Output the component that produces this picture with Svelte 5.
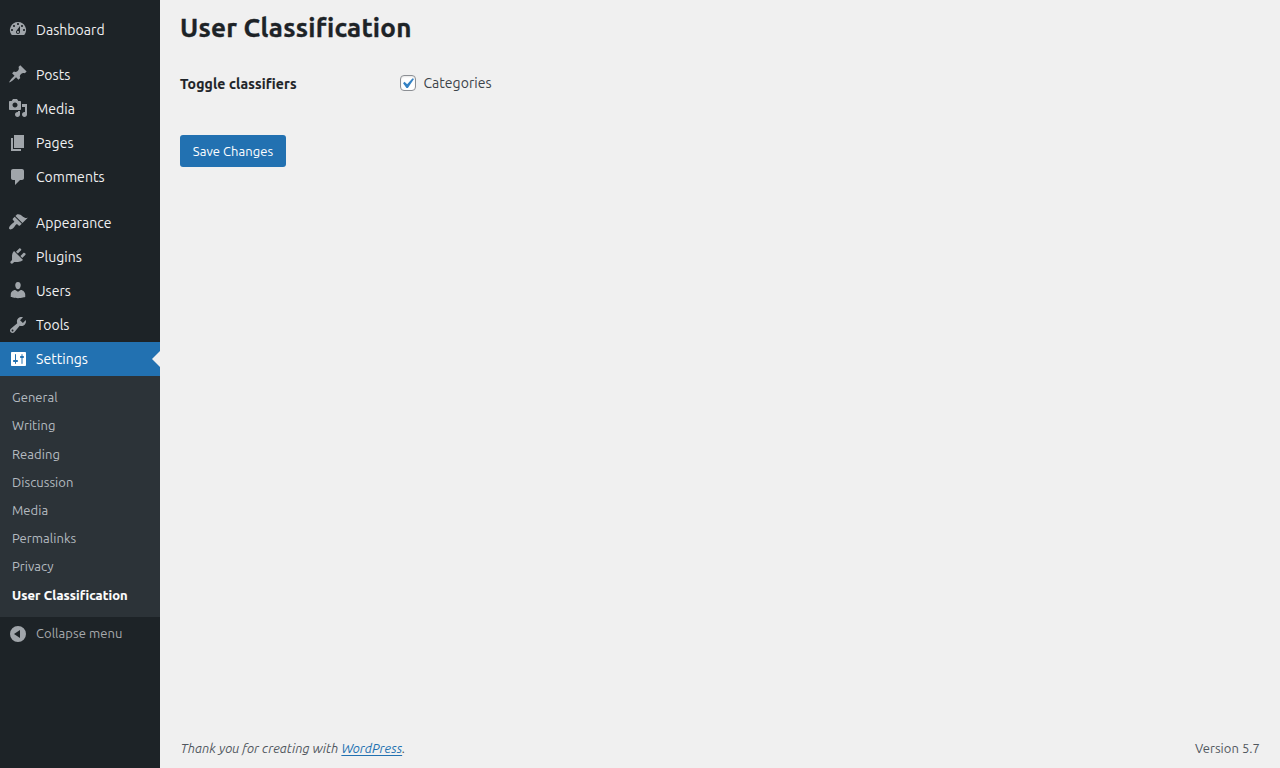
<script>
  const menu = [
    { label: 'Dashboard', dy: -1, d: 'M3.76 16h12.48A7.998 7.998 0 0 0 10 3a7.998 7.998 0 0 0-6.24 13zM10 4c.55 0 1 .45 1 1s-.45 1-1 1-1-.45-1-1 .45-1 1-1zM6 6c.55 0 1 .45 1 1s-.45 1-1 1-1-.45-1-1 .45-1 1-1zm8 0c.55 0 1 .45 1 1s-.45 1-1 1-1-.45-1-1 .45-1 1-1zm-5.37 5.55L12 7v6c0 1.1-.9 2-2 2s-2-.9-2-2c0-.57.24-1.08.63-1.45zM4 10c.55 0 1 .45 1 1s-.45 1-1 1-1-.45-1-1 .45-1 1-1zm12 0c.55 0 1 .45 1 1s-.45 1-1 1-1-.45-1-1 .45-1 1-1zm-5 3c0-.55-.45-1-1-1s-1 .45-1 1 .45 1 1 1 1-.45 1-1z' },
    { label: 'Posts', gap: 11, dy: -1, d: 'M10.44 3.02l1.82-1.82 6.36 6.35-1.83 1.82c-1.05-.68-2.48-.57-3.41.36l-.75.75c-.92.93-1.04 2.35-.35 3.41l-1.83 1.82-2.41-2.41-2.8 2.79c-.42.42-3.38 2.71-3.8 2.29s1.86-3.39 2.28-3.81l2.79-2.79L4.1 9.36l1.83-1.82c1.05.69 2.48.57 3.4-.36l.75-.75c.93-.92 1.05-2.35.36-3.41z' },
    { label: 'Media', dy: -1, d: 'M13 11V4c0-.55-.45-1-1-1h-1.67L9 1H5L3.67 3H2c-.55 0-1 .45-1 1v7c0 .55.45 1 1 1h10c.55 0 1-.45 1-1zM7 4.5c1.38 0 2.5 1.12 2.5 2.5S8.38 9.5 7 9.5 4.5 8.38 4.5 7 5.62 4.5 7 4.5zM14 6h5v10.5c0 1.38-1.12 2.5-2.5 2.5S14 17.88 14 16.5s1.12-2.5 2.5-2.5c.17 0 .34.02.5.05V9h-3V6zm-4 8.05V13h2v3.5c0 1.38-1.12 2.5-2.5 2.5S7 17.88 7 16.5 8.12 14 9.5 14c.17 0 .34.02.5.05z' },
    { label: 'Pages', dy: 0, d: 'M6 15V2h10v13H6zm-1 1h8v2H3V5h2v11z' },
    { label: 'Comments', dy: 0, d: 'M5 2h9c1.1 0 2 .9 2 2v7c0 1.1-.9 2-2 2h-2l-5 5v-5H5c-1.1 0-2-.9-2-2V4c0-1.1.9-2 2-2z' },
    { label: 'Appearance', gap: 12, dy: -1, d: 'M14.48 11.06L7.41 3.99l1.5-1.5c.5-.56 2.3-.47 3.51.32 1.21.8 1.43 1.28 2.91 2.1 1.18.64 2.45 1.26 4.45.85zm-.71.71L6.7 4.7 4.93 6.47c-.39.39-.39 1.02 0 1.41l1.06 1.06c.39.39.39 1.03 0 1.42-.6.6-1.43 1.11-2.21 1.69-.35.26-.7.53-1.01.84C1.43 14.23.4 16.08 1.4 17.07c.99 1 2.84-.03 4.18-1.36.31-.31.58-.66.85-1.02.57-.78 1.08-1.61 1.69-2.21.39-.39 1.02-.39 1.41 0l1.06 1.06c.39.39 1.02.39 1.41 0z' },
    { label: 'Plugins', dy: -1, d: 'M13.11 4.36L9.87 7.6 8 5.73l3.24-3.24c.35-.34 1.05-.2 1.56.32.52.51.66 1.21.31 1.55zm-8 1.77l.91-1.12 9.01 9.01-1.19.84c-.71.71-2.63 1.16-3.82 1.16H6.14L4.9 17.26c-.59.59-1.54.59-2.12 0-.59-.58-.59-1.53 0-2.12l1.24-1.24v-3.88c0-1.13.4-3.19 1.09-3.89zm7.26 3.97l3.24-3.24c.34-.35 1.04-.21 1.55.31.52.51.66 1.21.31 1.55l-3.24 3.25z' },
    { label: 'Users', dy: -1, d: 'M10 9.25c-2.27 0-2.73-3.44-2.73-3.44C7 4.02 7.82 2 9.97 2c2.16 0 2.98 2.02 2.71 3.81 0 0-.41 3.44-2.68 3.44zm0 2.57L12.72 10c2.39 0 4.52 2.33 4.52 4.53v2.49s-3.65 1.13-7.24 1.13c-3.65 0-7.24-1.13-7.24-1.13v-2.49c0-2.25 1.94-4.48 4.47-4.48z' },
    { label: 'Tools', dy: 0, d: 'M16.68 9.77c-1.34 1.34-3.3 1.67-4.95.99l-5.41 6.52c-.99.99-2.59.99-3.58 0s-.99-2.59 0-3.57l6.52-5.42c-.68-1.65-.35-3.61.99-4.95 1.28-1.28 3.12-1.62 4.72-1.06l-2.89 2.89 2.82 2.82 2.86-2.87c.53 1.58.18 3.39-1.08 4.65zM3.81 16.21c.4.39 1.04.39 1.43 0 .4-.4.4-1.04 0-1.43-.39-.4-1.03-.4-1.43 0-.39.39-.39 1.03 0 1.43z' },
    { label: 'Settings', current: true, dy: 0, d: 'M18 16V4c0-.55-.45-1-1-1H4c-.55 0-1 .45-1 1v12c0 .55.45 1 1 1h13c.55 0 1-.45 1-1zM8 11h1c.55 0 1 .45 1 1s-.45 1-1 1H8v1.5c0 .28-.22.5-.5.5s-.5-.22-.5-.5V13H6c-.55 0-1-.45-1-1s.45-1 1-1h1V5.5c0-.28.22-.5.5-.5s.5.22.5.5V11zm6-2h-1c-.55 0-1-.45-1-1s.45-1 1-1h.5V5.5c0-.28.22-.5.5-.5s.5.22.5.5V7h.5c.55 0 1 .45 1 1s-.45 1-1 1h-.5v5.5c0 .28-.22.5-.5.5s-.5-.22-.5-.5V9z' }
  ];
  const submenu = ['General', 'Writing', 'Reading', 'Discussion', 'Media', 'Permalinks', 'Privacy', 'User Classification'];
  let checked = $state(true);
</script>

<div class="admin">
  <nav class="sidebar">
    {#each menu as item}
      <a href="#top" class="item" class:current={item.current} style:margin-top="{item.gap ?? 0}px">
        <svg class="icon" viewBox="0 {-item.dy} 20 20"><path d={item.d} fill-rule="evenodd" /></svg>
        <span>{item.label}</span>
      </a>
    {/each}
    <div class="submenu">
      {#each submenu as label, i}
        <a href="#top" class:active={i === submenu.length - 1}>{label}</a>
      {/each}
    </div>
    <button class="collapse">
      <svg class="icon" viewBox="0 0 20 20"><path fill-rule="evenodd" d="M10 2a8 8 0 1 1 0 16a8 8 0 0 1 0-16zm2 12V6l-6 4z" /></svg>
      <span>Collapse menu</span>
    </button>
  </nav>
  <main>
    <h1>User Classification</h1>
    <div class="row">
      <strong>Toggle classifiers</strong>
      <label>
        <input type="checkbox" bind:checked />
        <span class="box">
          {#if checked}
            <svg viewBox="0 0 20 20"><path d="M14.83 4.89l1.34.94-5.81 8.38H9.02L5.78 9.67l1.34-1.25 2.57 2.4z" /></svg>
          {/if}
        </span>
        <span class="name">Categories</span>
      </label>
    </div>
    <button class="save">Save Changes</button>
    <footer>
      <em>Thank you for creating with <a href="#top">WordPress</a>.</em>
      <span class="version">Version 5.7</span>
    </footer>
  </main>
</div>

<style>
  :global(body) { background: #f0f0f0; }
  .admin {
    display: flex;
    height: 768px;
    overflow: hidden;
    font-family: Ubuntu, "Noto Sans", "Open Sans", sans-serif;
    font-size: 13px;
    letter-spacing: 0.05px;
    color: #3c434a;
  }
  .sidebar {
    width: 160px;
    flex: none;
    box-sizing: border-box;
    padding-top: 13px;
    background: #1d2327;
  }
  a { text-decoration: none; }
  .item {
    position: relative;
    display: flex;
    align-items: center;
    height: 34px;
    padding-left: 8px;
    gap: 8px;
    font-size: 14px;
    color: #f0f0f1;
  }
  .icon { width: 20px; height: 20px; flex: none; fill: #a0a5aa; }
  .current { background: #2271b1; color: #fff; }
  .current .icon { fill: #fff; }
  .current::after {
    content: "";
    position: absolute;
    right: 0;
    top: 9px;
    border: 8px solid transparent;
    border-left-width: 0;
    border-right-color: #f0f0f0;
  }
  .submenu {
    box-sizing: border-box;
    height: 241px;
    padding-top: 7.2px;
    background: #2c3338;
  }
  .submenu a {
    display: block;
    height: 28.2px;
    line-height: 28.2px;
    padding-left: 12px;
    color: #b5bbc0;
  }
  .submenu .active {
    color: #fff;
    font-weight: 700;
    letter-spacing: 0.12px;
    -webkit-text-stroke: 0.15px currentColor;
  }
  button { font: inherit; letter-spacing: inherit; border: 0; margin: 0; padding: 0; }
  .collapse {
    display: flex;
    align-items: center;
    gap: 8px;
    height: 34px;
    padding-left: 8px;
    background: none;
    color: #a7aaad;
  }
  .collapse span { padding-bottom: 2px; }
  main {
    flex: 1;
    display: flex;
    flex-direction: column;
    align-items: flex-start;
    padding: 0 20px;
  }
  h1 {
    margin: 10px 0 0;
    font-size: 26px;
    line-height: 36px;
    font-weight: 700;
    letter-spacing: 0.24px;
    -webkit-text-stroke: 0.35px currentColor;
    color: #1d2327;
  }
  .row {
    display: flex;
    align-items: center;
    height: 20px;
    margin-top: 27px;
    font-size: 14px;
  }
  strong {
    width: 220px;
    padding-top: 2px;
    color: #1d2327;
    letter-spacing: 0.13px;
    -webkit-text-stroke: 0.15px currentColor;
  }
  label { display: flex; align-items: center; gap: 7px; }
  input { position: absolute; opacity: 0; }
  .name { margin-left: 0.4px; }
  .box {
    width: 16px;
    height: 16px;
    box-sizing: border-box;
    border: 1px solid #8c8f94;
    border-radius: 4px;
    background: #fff;
    box-shadow: inset 0 1px 2px rgba(0, 0, 0, 0.1);
  }
  .box svg { display: block; width: 21px; height: 21px; margin: -3px 0 0 -4px; fill: #3582c4; }
  .save {
    width: 106px;
    height: 32px;
    margin-top: 42px;
    border-radius: 3px;
    background: #2271b1;
    color: #fff;
    white-space: nowrap;
  }
  footer {
    display: flex;
    justify-content: space-between;
    align-self: stretch;
    margin-top: auto;
    height: 30px;
    line-height: 20px;
    color: #50575e;
  }
  em { margin-left: 0.6px; letter-spacing: 0.02px; }
  footer a { color: #2271b1; text-decoration: underline; text-underline-offset: 2px; text-decoration-skip-ink: none; }
</style>
